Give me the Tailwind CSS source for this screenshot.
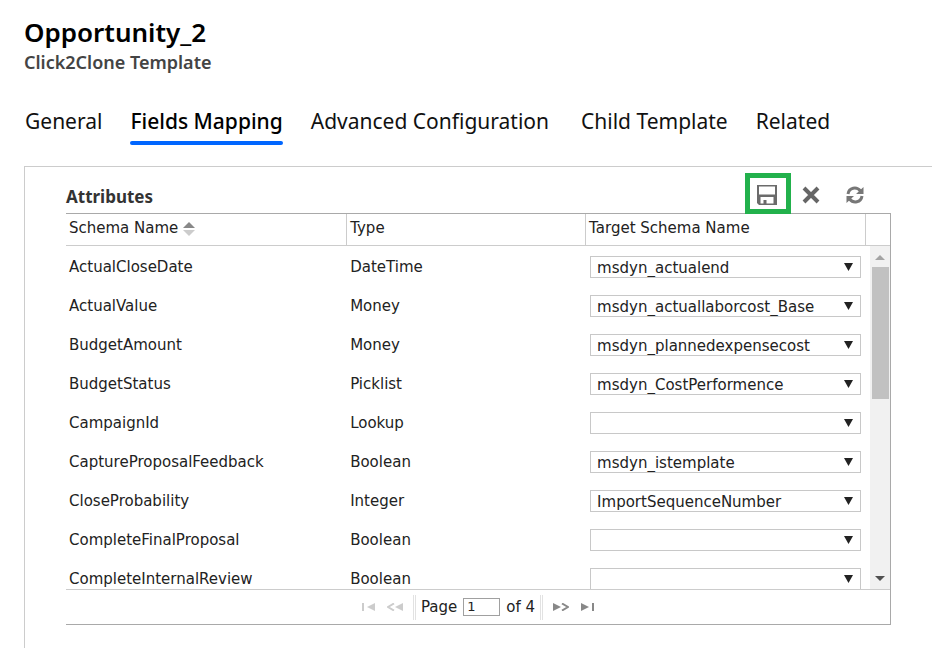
<!DOCTYPE html>
<html lang="en">
<head>
<meta charset="utf-8">
<meta name="viewport" content="width=device-width, initial-scale=1">
<title>Opportunity_2 - Click2Clone Template</title>
<script src="https://cdn.jsdelivr.net/npm/@tailwindcss/browser@4"></script>
</head>
<body class="h-screen overflow-hidden bg-white font-['Noto_Sans','Open_Sans',sans-serif] text-black">
<div class="flex h-full flex-col">
  <header class="px-6 pt-3.5">
    <h1 class="text-[26px] leading-9 font-semibold">Opportunity_2</h1>
    <p class="mt-0.5 text-[18px] leading-5 font-semibold text-[#444]">Click2Clone Template</p>
  </header>
  <nav class="mt-6 flex gap-7 px-[25px] text-[21px] leading-8 whitespace-nowrap" aria-label="Form sections">
    <a href="#" class="h-[50px] pt-[9px] text-[#111]">General</a>
    <a href="#" aria-current="page" class="h-[50px] pt-[9px] font-medium">Fields Mapping<span class="mt-1 block h-1 rounded-full bg-[#0066ff]"></span></a>
    <a href="#" class="h-[50px] pt-[9px] text-[#111]">Advanced Configuration</a>
    <a href="#" class="ml-1 h-[50px] pt-[9px] text-[#111]">Child Template</a>
    <a href="#" class="h-[50px] pt-[9px] text-[#111]">Related</a>
  </nav>
  <main class="mt-5 ml-6 flex-1 border-t border-l border-[#ccc] pr-[41px] pl-[41px] font-['DejaVu_Sans',sans-serif] text-[15px] text-[#222]">
    <div class="flex items-end justify-between">
      <h2 class="pb-1 font-['Noto_Sans','Open_Sans',sans-serif] text-[17px] leading-6 font-bold text-[#333]">Attributes</h2>
      <div class="relative mt-1.5 -mb-px flex items-center pr-[27px]">
        <button type="button" aria-label="Save" class="flex h-[41px] w-[46px] items-center justify-center border-[5px] border-[#22b14c] pt-0.5 pr-0.5">
          <svg width="20" height="20" viewBox="0 0 20 20" fill="#6b6b6b"><path fill-rule="evenodd" d="M0 0H20V20H2L0 18ZM2 1.500V9.500H18V1.500ZM3.500 12V18.500H6.500V15H9.500V18.500H16.500V12Z"/></svg>
        </button>
        <button type="button" aria-label="Delete" class="ml-[11px] pt-0.5"><svg width="18" height="18" viewBox="0 0 18 18" fill="none" stroke="#666" stroke-width="4"><path d="M2 2L16 16M16 2L2 16"/></svg></button>
        <button type="button" aria-label="Refresh" class="ml-[26px] pt-0.5"><svg width="18" height="18" viewBox="0 0 18 18" fill="none" stroke="#777" stroke-width="3"><path d="M2 8C3 1.500 10.500 0 14.500 5M16 10C15 16.500 7.500 18 3.500 13"/><path d="M17.500 1V8H10Z M0.500 17V10H8Z" fill="#777" stroke="none"/></svg></button>
      </div>
    </div>
    <section class="border-y border-r border-[#a9a9a9]">
      <div class="relative h-[376px] overflow-hidden border-b border-[#ccc]">
        <table class="w-full table-fixed border-separate border-spacing-0 text-left">
          <thead>
            <tr class="h-8">
              <th class="w-[34%] border-b border-[#ccc] pb-0.5 pl-[3px] font-normal" aria-sort="ascending">Schema Name <svg class="inline" width="12" height="14" viewBox="0 0 12 14"><path d="M6 0L12 6H0Z" fill="#888"/><path d="M0 8H12L6 14Z" fill="#ccc"/></svg></th>
              <th class="w-[29%] border-b border-l border-[#ccc] pb-0.5 pl-[3px] font-normal">Type</th>
              <th class="border-b border-l border-[#ccc] pb-0.5 pl-[3px] font-normal">Target Schema Name</th>
              <td class="w-[25px] border-b border-l border-[#ccc]"></td>
            </tr>
          </thead>
          <tbody id="rows"></tbody>
        </table>
        <div class="absolute top-8 right-0 bottom-0 w-5 bg-[#f1f1f1]" aria-hidden="true">
          <svg class="absolute top-[9px] left-[5px]" width="10" height="5"><path d="M5 0L10 5H0Z" fill="#a3a3a3"/></svg>
          <div class="mx-auto mt-[21px] h-[132px] w-[17px] bg-[#c1c1c1]"></div>
          <svg class="absolute bottom-2 left-[5px]" width="10" height="5"><path d="M0 0H10L5 5Z" fill="#505050"/></svg>
        </div>
      </div>
      <div class="flex h-[34px] items-center pl-[296px]">
        <button type="button" aria-label="First page" disabled><svg width="13" height="8" viewBox="0 0 13 8" fill="#ccc"><path d="M0 0H2V8H0ZM13 0V8L5 4Z"/></svg></button>
        <button type="button" aria-label="Previous page" disabled class="ml-3"><svg width="16" height="8" viewBox="0 0 16 8" fill="#ccc"><path d="M16 0V8L8 4Z"/><path d="M7 0.500L1 4L7 7.500" fill="none" stroke="#ccc" stroke-width="2"/></svg></button>
        <span class="ml-2.5 h-[25px] w-[3px] border-x border-[#e2e2e2]"></span>
        <label for="page" class="ml-[5px]">Page</label>
        <input id="page" value="1" class="mx-1.5 h-[18px] w-[37px] border border-[#a0a0a0] pl-[3px] text-[13px]">
        <span>of 4</span>
        <span class="ml-[5px] h-[25px] w-[3px] border-x border-[#e2e2e2]"></span>
        <button type="button" aria-label="Next page" class="ml-2.5"><svg width="16" height="8" viewBox="0 0 16 8" fill="#888"><path d="M0 0V8L8 4Z"/><path d="M9 0.500L15 4L9 7.500" fill="none" stroke="#888" stroke-width="2"/></svg></button>
        <button type="button" aria-label="Last page" class="ml-3"><svg width="13" height="8" viewBox="0 0 13 8" fill="#888"><path d="M11 0H13V8H11ZM0 0V8L8 4Z"/></svg></button>
      </div>
    </section>
  </main>
</div>
<script>
const rows = [
  ["ActualCloseDate", "DateTime", "msdyn_actualend"],
  ["ActualValue", "Money", "msdyn_actuallaborcost_Base"],
  ["BudgetAmount", "Money", "msdyn_plannedexpensecost"],
  ["BudgetStatus", "Picklist", "msdyn_CostPerformence"],
  ["CampaignId", "Lookup", ""],
  ["CaptureProposalFeedback", "Boolean", "msdyn_istemplate"],
  ["CloseProbability", "Integer", "ImportSequenceNumber"],
  ["CompleteFinalProposal", "Boolean", ""],
  ["CompleteInternalReview", "Boolean", ""]
];
document.getElementById("rows").innerHTML = rows.map(([name, type, target], i) => `
  <tr class="h-[39px]">
    <td class="pt-[3px] pl-[3px]"><label for="target-${i}">${name}</label></td>
    <td class="pt-[3px] pl-1">${type}</td>
    <td class="pt-[3px] pr-1 pl-[5px]"><div class="relative"><select id="target-${i}" class="block h-[22px] w-full appearance-none border border-[#c8c8c8] bg-white pt-px pl-1.5 leading-5"><option>${target}</option></select><svg class="pointer-events-none absolute top-[7px] right-2 fill-[#222]" width="9" height="8"><path d="M0 0H9L4.500 8Z"/></svg></div></td>
    <td></td>
  </tr>`).join("");
</script>
</body>
</html>
